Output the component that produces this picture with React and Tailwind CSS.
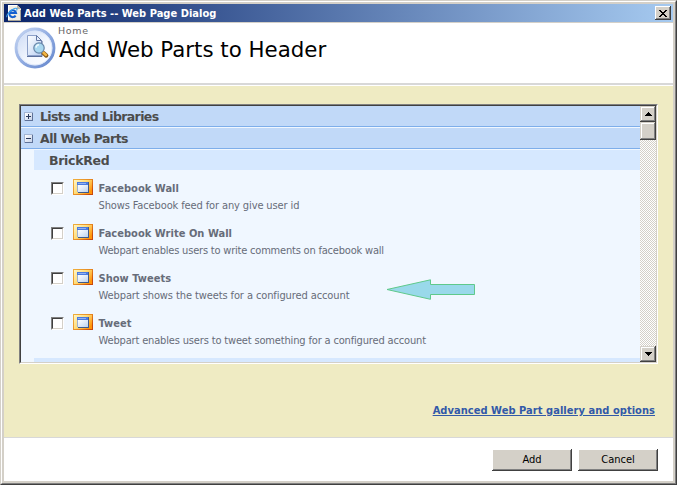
import React from 'react';

const webParts = [
  { name: 'Facebook Wall', text: 'Shows Facebook feed for any give user id', spacing: 'tracking-[-0.12px]' },
  { name: 'Facebook Write On Wall', text: 'Webpart enables users to write comments on facebook wall', spacing: 'tracking-[-0.2px]' },
  { name: 'Show Tweets', text: 'Webpart shows the tweets for a configured account', spacing: 'tracking-[-0.1px]' },
  { name: 'Tweet', text: 'Webpart enables users to tweet something for a configured account', spacing: 'tracking-[-0.16px]' },
];

const tahoma = "font-['DejaVu_Sans_Condensed','DejaVu_Sans',sans-serif] [font-stretch:condensed]";
const verdana = "font-['DejaVu_Sans',sans-serif]";

function PageIcon() {
  return (
    <svg width="18" height="18" viewBox="0 0 18 18" className="shrink-0">
      <g shapeRendering="crispEdges">
        <path d="M3 1h9l4 4v12H3z" fill="#f1eee4" />
        <path d="M3 1h9v1H4v15H3z" fill="#ffffff" />
        <path d="M12 1l4 4h-4z" fill="#b9b5a9" />
        <path d="M15 6h1v11H3v-1h12z" fill="#a8a498" />
      </g>
      <g fill="none">
        <path d="M10.600 11.600a3.400 3.400 0 1 1 .5-2.500H5" stroke="#1560cf" strokeWidth="2" />
        <path d="M2 13.200C0 11.500 8 3.500 11.300 4.300c1.200.4.700 1.500.2 2.200" stroke="#36a0f0" strokeWidth="1.100" />
      </g>
    </svg>
  );
}

function HeaderIcon() {
  return (
    <svg width="42" height="42" viewBox="0 0 42 42" className="shrink-0">
      <defs>
        <linearGradient id="ring" x1="0" y1="0" x2="1" y2="1">
          <stop offset="0" stopColor="#c9d8f3" />
          <stop offset=".5" stopColor="#91ace1" />
          <stop offset="1" stopColor="#6486cc" />
        </linearGradient>
        <linearGradient id="disc" x1="0" y1="0" x2="1" y2="1">
          <stop offset="0" stopColor="#c9d8f4" />
          <stop offset=".55" stopColor="#f3f7fe" />
          <stop offset="1" stopColor="#fff" />
        </linearGradient>
        <linearGradient id="sheet" x1="0" y1="0" x2="1" y2="1">
          <stop offset="0" stopColor="#fff" />
          <stop offset="1" stopColor="#b9cff2" />
        </linearGradient>
      </defs>
      <circle cx="21" cy="21" r="18.8" fill="url(#disc)" stroke="url(#ring)" strokeWidth="3.2" />
      <circle cx="21" cy="21" r="17" fill="none" stroke="#dbe6f9" strokeWidth="1" />
      <path d="M13.500 8.500h9l5 5v15h-14z" fill="url(#sheet)" stroke="#8b9fc8" />
      <path d="M13 29.500h15V14" fill="none" stroke="#5a6f9c" />
      <path d="M22.500 8.500v5h5z" fill="#e6eefb" stroke="#6478a4" />
      <path d="M29.500 26l2.800 2.600" stroke="#8a5a14" strokeWidth="4.200" strokeLinecap="round" />
      <path d="M29.300 25.500l2.700 2.500" stroke="#f2b544" strokeWidth="2.400" strokeLinecap="round" />
      <circle cx="25" cy="21" r="5.2" fill="#a9d8f0" stroke="#6886a8" strokeWidth="1.2" />
      <path d="M22 20.600a3.200 3.200 0 0 1 3-2.800" stroke="#eefaff" strokeWidth="1.400" fill="none" />
    </svg>
  );
}

function PartIcon() {
  return (
    <svg width="20" height="16" viewBox="0 0 20 16" shapeRendering="crispEdges" className="shrink-0">
      <defs>
        <linearGradient id="gold" x1="0" y1="0" x2="1" y2=".7">
          <stop offset="0" stopColor="#fff6c8" />
          <stop offset=".5" stopColor="#ffdc78" />
          <stop offset="1" stopColor="#ff9408" />
        </linearGradient>
        <linearGradient id="goldEdge" x1="0" y1="0" x2="1" y2=".7">
          <stop offset="0" stopColor="#efb240" />
          <stop offset=".6" stopColor="#e88a20" />
          <stop offset="1" stopColor="#c9480c" />
        </linearGradient>
        <linearGradient id="pane" x1="0" y1="0" x2="1" y2="1">
          <stop offset="0" stopColor="#fff" />
          <stop offset="1" stopColor="#bdd3f0" />
        </linearGradient>
      </defs>
      <path d="M0 0h20v16H0z" fill="url(#goldEdge)" />
      <path d="M1 1h18v14H1z" fill="url(#gold)" />
      <path d="M4 3h11v10H4z" fill="#9db0d2" />
      <path d="M15 3h1v11H5v-1h10z" fill="#3d5a8e" />
      <path d="M5 6h10v7H5z" fill="url(#pane)" />
      <path d="M4 3h11v3H4z" fill="#4a7be0" />
      <path d="M5 4h8v1H5z" fill="#8fb0f2" />
    </svg>
  );
}

function ExpandIcon({ open }) {
  return (
    <svg width="9" height="9" viewBox="0 0 9 9" shapeRendering="crispEdges" className="shrink-0">
      <defs>
        <linearGradient id="toggleFace" x1="0" y1="0" x2="1" y2="1">
          <stop offset="0" stopColor="#ffffff" />
          <stop offset="1" stopColor="#c6d3ea" />
        </linearGradient>
      </defs>
      <path d="M0 0h9v9H0z" fill="#a3b5d3" />
      <path d="M8 1h1v8H1V8h7z" fill="#5f7298" />
      <path d="M1 1h7v7H1z" fill="url(#toggleFace)" />
      <path d={open ? 'M2 4h5v1H2z' : 'M2 4h5v1H2zM4 2h1v5H4z'} fill="#2b3a5c" />
    </svg>
  );
}

function Raised({ className, children }) {
  return (
    <div className={`flex shrink-0 items-center justify-center bg-[#d4d0c8] ${className}`}>{children}</div>
  );
}

const scrollEdge =
  'shadow-[inset_-1px_-1px_#404040,inset_1px_1px_#d4d0c8,inset_-2px_-2px_#808080,inset_2px_2px_#ffffff]';
const buttonEdge =
  'shadow-[inset_-1px_-1px_#404040,inset_1px_1px_#ffffff,inset_-2px_-2px_#808080]';

export default function App() {
  return (
    <div className="h-[485px] w-[677px] overflow-hidden border border-t-[#d4d0c8] border-r-[#404040] border-b-[#404040] border-l-[#d4d0c8]">
      <div className="h-full border border-t-white border-r-[#808080] border-b-[#808080] border-l-white">
        <div className="flex h-full flex-col border-2 border-[#d4d0c8] bg-white">
          <header className="flex h-[19px] shrink-0 items-center border-b border-[#d4d0c8] bg-linear-to-r/srgb from-[#0a246a] to-[#a6caf0] pr-[2px] pl-[1px]">
            <PageIcon />
            <span className={`${tahoma} ml-[1px] grow pt-[2px] text-[11px] font-bold leading-[16px] tracking-[0.03px] whitespace-nowrap text-white`}>
              Add Web Parts -- Web Page Dialog
            </span>
            <Raised className={`h-[14px] w-4 ${buttonEdge}`}>
              <svg width="8" height="7" viewBox="0 0 8 7" shapeRendering="crispEdges">
                <path d="M0 0h2v1h1v1h2V1h1V0h2v1H7v1H6v1H5v1h1v1h1v1h1v1H6V6H5V5H3v1H2v1H0V6h1V5h1V4h1V3H2V2H1V1H0z" fill="#000" />
              </svg>
            </Raised>
          </header>

          <div className="flex h-[60px] shrink-0 pt-[4px] pl-[10px]">
            <HeaderIcon />
            <div className={`${verdana} ml-[2px] whitespace-nowrap`}>
              <div className="mt-[-2px] text-[9.5px] leading-[12px] tracking-[0.7px] text-[#666666]">Home</div>
              <h1 className="ml-[1px] text-[21.33px] leading-[25px] text-black">Add Web Parts to Header</h1>
            </div>
          </div>
          <div className="h-[3px] shrink-0 border-t-2 border-[#d8d8d8] bg-white" />

          <main className="flex h-[351px] shrink-0 flex-col items-start bg-[#efebc3] pt-[18px] pl-[15px]">
            <div className="h-[260px] w-[639px] border border-t-[#808080] border-r-white border-b-white border-l-[#808080]">
              <div className="flex h-full border border-t-[#404040] border-r-[#d4d0c8] border-b-[#d4d0c8] border-l-[#404040]">
                <div className={`${verdana} relative h-full w-[619px] overflow-hidden bg-[#f0f7ff]`}>
                  <div className="flex h-[21px] items-center border-b border-[#7eaeea] bg-[#c1d9f8] pl-[3px]">
                    <ExpandIcon />
                    <span className="ml-[7px] pt-[2px] text-[12.5px] leading-[18px] font-bold tracking-[-0.62px] whitespace-nowrap text-[#4c4c4c]">Lists and Libraries</span>
                  </div>
                  <div className="mt-px flex h-[21px] items-center border-b border-[#7eaeea] bg-[#c1d9f8] pl-[3px]">
                    <ExpandIcon open />
                    <span className="ml-[7px] pt-[2px] text-[12.5px] leading-[18px] font-bold tracking-[-0.5px] whitespace-nowrap text-[#4c4c4c]">All Web Parts</span>
                  </div>
                  <div className="mt-px ml-[13px] h-5 bg-[#d6e8ff] pt-px pl-[15px] text-[12.5px] leading-[19px] font-bold tracking-[-0.3px] text-[#4c4c4c]">BrickRed</div>
                  <ul className="h-[188px] pt-[9px] pl-[30px]">
                    {webParts.map((part) => (
                      <li key={part.name} className="flex h-[45px] items-start">
                        <span className="mt-[3px] size-[13px] border border-t-[#808080] border-r-white border-b-white border-l-[#808080]">
                          <span className="block size-full border border-t-[#404040] border-r-[#d4d0c8] border-b-[#d4d0c8] border-l-[#404040] bg-white" />
                        </span>
                        <span className="ml-[9px]"><PartIcon /></span>
                        <div className={`${tahoma} ml-[5.500px] whitespace-nowrap text-[#676c79]`}>
                          <div className={`${verdana} pt-px text-[11px] leading-[18px] font-bold tracking-[0.03px]`}>{part.name}</div>
                          <div className={`text-[11px] leading-[16px] ${part.spacing}`}>{part.text}</div>
                        </div>
                      </li>
                    ))}
                  </ul>
                  <div className="ml-[13px] h-[4px] bg-[#d6e8ff]" />
                  <svg width="90" height="22" viewBox="0 0 90 22" className="absolute top-[173px] left-[365px]">
                    <path d="M1 10.5L44.500 .8V5.500H88.500V15.500H44.500V20.300Z" fill="#99d9ea" stroke="#5fc98b" strokeWidth="1" />
                  </svg>
                </div>
                <div className="flex h-full w-4 flex-col bg-[conic-gradient(#ffffff_25%,#d4d0c8_0_50%,#ffffff_0_75%,#d4d0c8_0)] bg-[length:2px_2px]">
                  <Raised className={`h-4 w-4 ${scrollEdge}`}>
                    <svg width="7" height="4" viewBox="0 0 7 4" shapeRendering="crispEdges"><path d="M3 0h1v1h1v1h1v1h1v1H0V3h1V2h1V1h1z" /></svg>
                  </Raised>
                  <Raised className={`h-[18px] w-4 ${scrollEdge}`} />
                  <div className="grow" />
                  <Raised className={`h-4 w-4 ${scrollEdge}`}>
                    <svg width="7" height="4" viewBox="0 0 7 4" shapeRendering="crispEdges"><path d="M0 0h7v1H6v1H5v1H4v1H3V3H2V2H1V1H0z" /></svg>
                  </Raised>
                </div>
              </div>
            </div>
            <a className={`${tahoma} mt-[39px] mr-[18px] self-end text-[11px] leading-4 font-bold tracking-[0.05px] whitespace-nowrap text-[#3259a8] underline`}>
              Advanced Web Part gallery and options
            </a>
          </main>

          <footer className={`${tahoma} flex grow items-start justify-end gap-[6px] border-t border-[#d8d8d8] pt-[11px] pr-[15px] text-[11px] text-black`}>
            <Raised className={`h-[22px] w-[80px] pt-px ${buttonEdge}`}>Add</Raised>
            <Raised className={`h-[22px] w-[80px] pt-px ${buttonEdge}`}>Cancel</Raised>
          </footer>
        </div>
      </div>
    </div>
  );
}
